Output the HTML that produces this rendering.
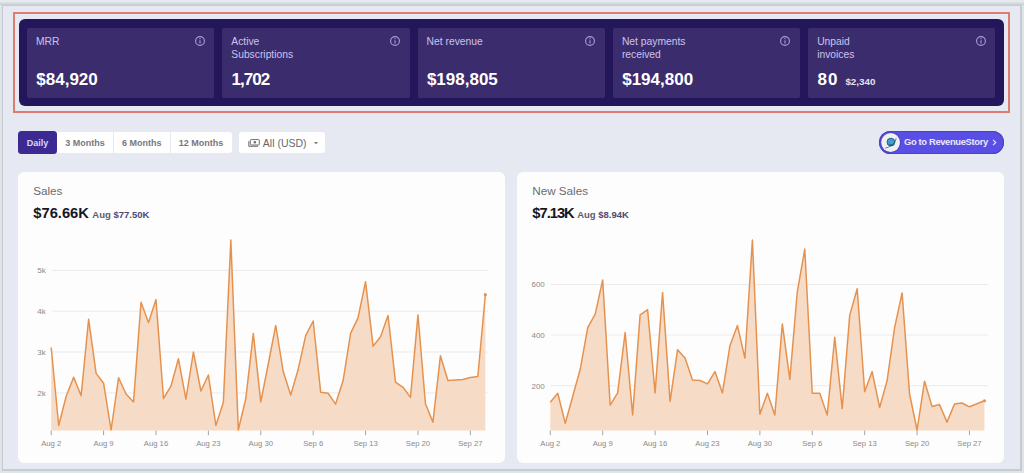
<!DOCTYPE html>
<html><head><meta charset="utf-8">
<style>
*{margin:0;padding:0;box-sizing:border-box}
html,body{width:1024px;height:473px;overflow:hidden;background:linear-gradient(#e7ecf1 0px,#e4e9ed 1.5px,#d3d9dd 3.5px,#c8ced2 5px) top/100% 5px no-repeat,#dfe4e7;font-family:"Liberation Sans",sans-serif}
#frame{position:absolute;left:1.5px;top:4.5px;width:1520px;height:0}
.abs{position:absolute}
#page{position:absolute;left:2px;top:5px;width:1020px;height:466px;background:#e7e9f2;border-left:1.5px solid #c4ccd1;border-top:1.5px solid #c4ccd1;border-right:2px solid #c4ccd1;border-bottom:2px solid #c4ccd1}
#orange{position:absolute;left:12.5px;top:12px;width:997px;height:101px;border:2px solid #dd7c6f}
#dark{position:absolute;left:18.5px;top:18.5px;width:985.5px;height:87.5px;background:#23165a;border-radius:6px}
.card{position:absolute;top:27.7px;width:187.3px;height:70px;background:#3b2d6d;border-radius:2px}
.lab{position:absolute;left:9px;top:7px;font-size:10.3px;line-height:13px;color:#cbc3ee}
.info{position:absolute;left:166.5px;top:7.2px}
.val{position:absolute;left:9.3px;top:43.5px;font-size:17px;font-weight:bold;color:#fff;line-height:18px;white-space:nowrap}
.sub{font-size:9.8px;margin-left:7px;color:#e4e0f4}
.btn{position:absolute;top:132px;height:21px;background:#fff;font-size:9px;font-weight:bold;color:#77777d;text-align:center;line-height:22px}
.chartcard{position:absolute;top:172px;width:487px;height:291px;background:#fdfdfd;border-radius:6px}
.ttl{position:absolute;top:12px;left:15.2px;font-size:11.7px;color:#6c6c70}
.big{position:absolute;top:32.6px;left:15.3px;font-size:14.7px;font-weight:bold;color:#16161f;white-space:nowrap}
.big span{font-size:9.5px;color:#5d5a70;margin-left:3.5px}
.big span b{color:#4f4878;font-weight:bold}
.ch text{font-family:"Liberation Sans",sans-serif}
.yl{font-size:8px;fill:#8a8a8a}
.xl{font-size:7.7px;fill:#8a8a8a}
</style></head><body>
<div id="page"></div>
<div id="orange"></div>
<div id="dark"></div>
<div class="card" style="left:27.0px">
<div class="lab">MRR</div>
<svg class="info" width="12" height="12" viewBox="0 0 12 12"><circle cx="6" cy="6" r="4.4" fill="none" stroke="#a99bdc" stroke-width="1.1"/><line x1="6" y1="5.2" x2="6" y2="8.4" stroke="#a99bdc" stroke-width="1.1"/><circle cx="6" cy="3.7" r="0.65" fill="#a99bdc"/></svg>
<div class="val">$84,920</div>
</div><div class="card" style="left:222.3px">
<div class="lab">Active<br>Subscriptions</div>
<svg class="info" width="12" height="12" viewBox="0 0 12 12"><circle cx="6" cy="6" r="4.4" fill="none" stroke="#a99bdc" stroke-width="1.1"/><line x1="6" y1="5.2" x2="6" y2="8.4" stroke="#a99bdc" stroke-width="1.1"/><circle cx="6" cy="3.7" r="0.65" fill="#a99bdc"/></svg>
<div class="val"><span style="letter-spacing:-1px">1,702</span></div>
</div><div class="card" style="left:417.6px">
<div class="lab">Net revenue</div>
<svg class="info" width="12" height="12" viewBox="0 0 12 12"><circle cx="6" cy="6" r="4.4" fill="none" stroke="#a99bdc" stroke-width="1.1"/><line x1="6" y1="5.2" x2="6" y2="8.4" stroke="#a99bdc" stroke-width="1.1"/><circle cx="6" cy="3.7" r="0.65" fill="#a99bdc"/></svg>
<div class="val">$198,805</div>
</div><div class="card" style="left:612.9px">
<div class="lab">Net payments<br>received</div>
<svg class="info" width="12" height="12" viewBox="0 0 12 12"><circle cx="6" cy="6" r="4.4" fill="none" stroke="#a99bdc" stroke-width="1.1"/><line x1="6" y1="5.2" x2="6" y2="8.4" stroke="#a99bdc" stroke-width="1.1"/><circle cx="6" cy="3.7" r="0.65" fill="#a99bdc"/></svg>
<div class="val">$194,800</div>
</div><div class="card" style="left:808.2px">
<div class="lab">Unpaid<br>invoices</div>
<svg class="info" width="12" height="12" viewBox="0 0 12 12"><circle cx="6" cy="6" r="4.4" fill="none" stroke="#a99bdc" stroke-width="1.1"/><line x1="6" y1="5.2" x2="6" y2="8.4" stroke="#a99bdc" stroke-width="1.1"/><circle cx="6" cy="3.7" r="0.65" fill="#a99bdc"/></svg>
<div class="val"><span style="letter-spacing:1px">80</span><span class="sub">$2,340</span></div>
</div>
<div class="btn" style="left:18px;top:131px;height:23px;line-height:24px;width:39px;background:#3c2a92;color:#ddd6f4;border-radius:3.5px">Daily</div>
<div class="btn" style="left:57px;width:56px;border-radius:0">3 Months</div>
<div class="btn" style="left:114px;width:55.5px;border-radius:0">6 Months</div>
<div class="btn" style="left:170.5px;width:61px;border-radius:0 3px 3px 0">12 Months</div>
<div class="btn" style="left:239px;width:86px;border-radius:3px;font-weight:normal;font-size:10.5px;color:#66666c;text-align:left">
<svg style="position:absolute;left:9px;top:7px" width="12" height="8" viewBox="0 0 12 8"><rect x="2.3" y="0.6" width="9" height="5.4" rx="0.8" fill="none" stroke="#6a6a70" stroke-width="1"/><path d="M0.8 2.2 V7.3 H10" fill="none" stroke="#6a6a70" stroke-width="1"/><circle cx="6.8" cy="3.3" r="1.3" fill="#6a6a70"/></svg>
<span style="position:absolute;left:23.8px;top:-0.4px">All (USD)</span>
<svg style="position:absolute;left:75px;top:9.5px" width="4" height="3" viewBox="0 0 4 3"><path d="M0 0 H4 L2 2.2 Z" fill="#777"/></svg>
</div>
<div class="abs" style="left:879px;top:131px;width:125px;height:23px;border-radius:11.5px;background:#5a4fe4;box-shadow:inset 0 0 0 1px #4c42c8"></div>
<svg class="abs" style="left:879px;top:131px" width="23" height="23" viewBox="0 0 23 23">
<circle cx="11.6" cy="11.5" r="10.3" fill="#4a40bf"/>
<circle cx="11.6" cy="11.5" r="9.4" fill="#eef0f4"/>
<circle cx="11.9" cy="11.1" r="3.9" fill="#3b9fd2" stroke="#22507a" stroke-width="0.9"/>
<path d="M10.2 12.8 A2.2 2.2 0 0 0 13.6 13.4" fill="none" stroke="#1d4d78" stroke-width="0.9"/>
<path d="M6.2 17.2 Q9.5 16.6 13.5 13.8 Q16.8 11 17.2 7.2" fill="none" stroke="#2b4c72" stroke-width="0.7"/>
</svg>
<div class="abs" style="left:904px;top:136px;font-size:9.4px;font-weight:bold;color:#ebe8fc;white-space:nowrap;letter-spacing:-0.35px">Go to RevenueStory</div>
<svg class="abs" style="left:992px;top:139px" width="5" height="7" viewBox="0 0 5 7"><path d="M1 0.8 L3.8 3.5 L1 6.2" fill="none" stroke="#ebe8fc" stroke-width="1.1"/></svg>
<div class="chartcard" style="left:18px">
<div class="ttl">Sales</div>
<div class="big">$76.66K<span>Aug <b>$77.50K</b></span></div>
</div>
<div class="chartcard" style="left:517px">
<div class="ttl">New Sales</div>
<div class="big"><i style="font-style:normal;letter-spacing:-1px">$7.13K</i><span>Aug <b>$8.94K</b></span></div>
</div>
<svg class="ch" width="1024" height="473" viewBox="0 0 1024 473" style="position:absolute;left:0;top:0">
<line x1="51.7" y1="270.4" x2="488" y2="270.4" stroke="#ebebee" stroke-width="1"/>
<text x="45.7" y="273.2" text-anchor="end" class="yl">5k</text>
<line x1="51.7" y1="311.2" x2="488" y2="311.2" stroke="#ebebee" stroke-width="1"/>
<text x="45.7" y="314.0" text-anchor="end" class="yl">4k</text>
<line x1="51.7" y1="352.0" x2="488" y2="352.0" stroke="#ebebee" stroke-width="1"/>
<text x="45.7" y="354.8" text-anchor="end" class="yl">3k</text>
<line x1="51.7" y1="392.9" x2="488" y2="392.9" stroke="#ebebee" stroke-width="1"/>
<text x="45.7" y="395.7" text-anchor="end" class="yl">2k</text>
<path d="M51.20,347.50 L58.69,425.50 L66.17,396.30 L73.66,377.20 L81.14,395.80 L88.62,319.20 L96.11,373.40 L103.59,383.20 L111.08,430.00 L118.57,377.80 L126.05,394.00 L133.54,401.90 L141.02,302.30 L148.50,322.50 L155.99,299.60 L163.48,398.50 L170.96,386.20 L178.44,358.80 L185.93,399.20 L193.42,352.00 L200.90,391.00 L208.38,375.00 L215.87,425.50 L223.36,402.30 L230.84,240.00 L238.32,430.00 L245.81,398.50 L253.30,333.60 L260.78,401.90 L268.26,364.00 L275.75,325.50 L283.24,371.60 L290.72,395.10 L298.21,369.30 L305.69,335.60 L313.18,321.00 L320.66,392.20 L328.14,393.30 L335.63,404.10 L343.12,380.50 L350.60,333.40 L358.08,317.60 L365.57,281.70 L373.06,346.20 L380.54,336.70 L388.02,315.40 L395.51,382.10 L403.00,387.30 L410.48,397.40 L417.97,314.90 L425.45,403.70 L432.94,422.10 L440.42,355.80 L447.91,380.50 L455.39,379.90 L462.88,379.40 L470.36,377.60 L477.85,376.50 L485.33,294.70 L485.33,430.6 L51.20,430.6 Z" fill="#f6dcc6"/>
<clipPath id="c51"><rect x="0" y="0" width="1024" height="431.3"/></clipPath>
<path d="M51.20,347.50 L58.69,425.50 L66.17,396.30 L73.66,377.20 L81.14,395.80 L88.62,319.20 L96.11,373.40 L103.59,383.20 L111.08,430.00 L118.57,377.80 L126.05,394.00 L133.54,401.90 L141.02,302.30 L148.50,322.50 L155.99,299.60 L163.48,398.50 L170.96,386.20 L178.44,358.80 L185.93,399.20 L193.42,352.00 L200.90,391.00 L208.38,375.00 L215.87,425.50 L223.36,402.30 L230.84,240.00 L238.32,430.00 L245.81,398.50 L253.30,333.60 L260.78,401.90 L268.26,364.00 L275.75,325.50 L283.24,371.60 L290.72,395.10 L298.21,369.30 L305.69,335.60 L313.18,321.00 L320.66,392.20 L328.14,393.30 L335.63,404.10 L343.12,380.50 L350.60,333.40 L358.08,317.60 L365.57,281.70 L373.06,346.20 L380.54,336.70 L388.02,315.40 L395.51,382.10 L403.00,387.30 L410.48,397.40 L417.97,314.90 L425.45,403.70 L432.94,422.10 L440.42,355.80 L447.91,380.50 L455.39,379.90 L462.88,379.40 L470.36,377.60 L477.85,376.50 L485.33,294.70" fill="none" stroke="#e6924f" stroke-width="1.5" stroke-linejoin="round" clip-path="url(#c51)"/>
<circle cx="485.33" cy="294.70" r="1.6" fill="#e6924f"/>
<line x1="51.20" y1="430.6" x2="51.20" y2="435.2" stroke="#9a9a9a" stroke-width="0.9"/>
<text x="51.20" y="446.4" text-anchor="middle" class="xl">Aug 2</text>
<line x1="103.59" y1="430.6" x2="103.59" y2="435.2" stroke="#9a9a9a" stroke-width="0.9"/>
<text x="103.59" y="446.4" text-anchor="middle" class="xl">Aug 9</text>
<line x1="155.99" y1="430.6" x2="155.99" y2="435.2" stroke="#9a9a9a" stroke-width="0.9"/>
<text x="155.99" y="446.4" text-anchor="middle" class="xl">Aug 16</text>
<line x1="208.38" y1="430.6" x2="208.38" y2="435.2" stroke="#9a9a9a" stroke-width="0.9"/>
<text x="208.38" y="446.4" text-anchor="middle" class="xl">Aug 23</text>
<line x1="260.78" y1="430.6" x2="260.78" y2="435.2" stroke="#9a9a9a" stroke-width="0.9"/>
<text x="260.78" y="446.4" text-anchor="middle" class="xl">Aug 30</text>
<line x1="313.18" y1="430.6" x2="313.18" y2="435.2" stroke="#9a9a9a" stroke-width="0.9"/>
<text x="313.18" y="446.4" text-anchor="middle" class="xl">Sep 6</text>
<line x1="365.57" y1="430.6" x2="365.57" y2="435.2" stroke="#9a9a9a" stroke-width="0.9"/>
<text x="365.57" y="446.4" text-anchor="middle" class="xl">Sep 13</text>
<line x1="417.97" y1="430.6" x2="417.97" y2="435.2" stroke="#9a9a9a" stroke-width="0.9"/>
<text x="417.97" y="446.4" text-anchor="middle" class="xl">Sep 20</text>
<line x1="470.36" y1="430.6" x2="470.36" y2="435.2" stroke="#9a9a9a" stroke-width="0.9"/>
<text x="470.36" y="446.4" text-anchor="middle" class="xl">Sep 27</text>
</svg>
<svg class="ch" width="1024" height="473" viewBox="0 0 1024 473" style="position:absolute;left:0;top:0">
<line x1="550.8" y1="284.6" x2="988" y2="284.6" stroke="#ebebee" stroke-width="1"/>
<text x="544.8" y="287.4" text-anchor="end" class="yl">600</text>
<line x1="550.8" y1="335.0" x2="988" y2="335.0" stroke="#ebebee" stroke-width="1"/>
<text x="544.8" y="337.8" text-anchor="end" class="yl">400</text>
<line x1="550.8" y1="385.7" x2="988" y2="385.7" stroke="#ebebee" stroke-width="1"/>
<text x="544.8" y="388.5" text-anchor="end" class="yl">200</text>
<path d="M550.30,402.30 L557.78,393.30 L565.27,423.20 L572.75,396.30 L580.24,369.30 L587.72,327.70 L595.21,314.20 L602.69,279.90 L610.18,405.20 L617.66,392.90 L625.15,332.50 L632.63,414.90 L640.12,314.90 L647.61,309.70 L655.09,392.90 L662.57,292.40 L670.06,401.40 L677.54,349.80 L685.03,358.10 L692.51,379.90 L700.00,380.50 L707.48,383.90 L714.97,371.60 L722.45,392.90 L729.94,345.70 L737.42,325.50 L744.91,358.10 L752.39,240.10 L759.88,414.20 L767.37,393.30 L774.85,414.90 L782.33,323.90 L789.82,379.40 L797.30,291.80 L804.79,249.10 L812.27,393.30 L819.76,393.30 L827.24,414.90 L834.73,337.20 L842.21,408.60 L849.70,315.40 L857.18,288.80 L864.67,391.80 L872.15,371.60 L879.64,407.50 L887.12,380.50 L894.61,327.70 L902.10,292.90 L909.58,394.00 L917.07,430.00 L924.55,381.20 L932.03,406.40 L939.52,404.60 L947.00,422.10 L954.49,404.10 L961.97,403.00 L969.46,406.80 L976.94,403.70 L984.43,400.80 L984.43,430.6 L550.30,430.6 Z" fill="#f6dcc6"/>
<clipPath id="c550"><rect x="0" y="0" width="1024" height="431.3"/></clipPath>
<path d="M550.30,402.30 L557.78,393.30 L565.27,423.20 L572.75,396.30 L580.24,369.30 L587.72,327.70 L595.21,314.20 L602.69,279.90 L610.18,405.20 L617.66,392.90 L625.15,332.50 L632.63,414.90 L640.12,314.90 L647.61,309.70 L655.09,392.90 L662.57,292.40 L670.06,401.40 L677.54,349.80 L685.03,358.10 L692.51,379.90 L700.00,380.50 L707.48,383.90 L714.97,371.60 L722.45,392.90 L729.94,345.70 L737.42,325.50 L744.91,358.10 L752.39,240.10 L759.88,414.20 L767.37,393.30 L774.85,414.90 L782.33,323.90 L789.82,379.40 L797.30,291.80 L804.79,249.10 L812.27,393.30 L819.76,393.30 L827.24,414.90 L834.73,337.20 L842.21,408.60 L849.70,315.40 L857.18,288.80 L864.67,391.80 L872.15,371.60 L879.64,407.50 L887.12,380.50 L894.61,327.70 L902.10,292.90 L909.58,394.00 L917.07,430.00 L924.55,381.20 L932.03,406.40 L939.52,404.60 L947.00,422.10 L954.49,404.10 L961.97,403.00 L969.46,406.80 L976.94,403.70 L984.43,400.80" fill="none" stroke="#e6924f" stroke-width="1.5" stroke-linejoin="round" clip-path="url(#c550)"/>
<circle cx="984.43" cy="400.80" r="1.6" fill="#e6924f"/>
<line x1="550.30" y1="430.6" x2="550.30" y2="435.2" stroke="#9a9a9a" stroke-width="0.9"/>
<text x="550.30" y="446.4" text-anchor="middle" class="xl">Aug 2</text>
<line x1="602.69" y1="430.6" x2="602.69" y2="435.2" stroke="#9a9a9a" stroke-width="0.9"/>
<text x="602.69" y="446.4" text-anchor="middle" class="xl">Aug 9</text>
<line x1="655.09" y1="430.6" x2="655.09" y2="435.2" stroke="#9a9a9a" stroke-width="0.9"/>
<text x="655.09" y="446.4" text-anchor="middle" class="xl">Aug 16</text>
<line x1="707.48" y1="430.6" x2="707.48" y2="435.2" stroke="#9a9a9a" stroke-width="0.9"/>
<text x="707.48" y="446.4" text-anchor="middle" class="xl">Aug 23</text>
<line x1="759.88" y1="430.6" x2="759.88" y2="435.2" stroke="#9a9a9a" stroke-width="0.9"/>
<text x="759.88" y="446.4" text-anchor="middle" class="xl">Aug 30</text>
<line x1="812.27" y1="430.6" x2="812.27" y2="435.2" stroke="#9a9a9a" stroke-width="0.9"/>
<text x="812.27" y="446.4" text-anchor="middle" class="xl">Sep 6</text>
<line x1="864.67" y1="430.6" x2="864.67" y2="435.2" stroke="#9a9a9a" stroke-width="0.9"/>
<text x="864.67" y="446.4" text-anchor="middle" class="xl">Sep 13</text>
<line x1="917.07" y1="430.6" x2="917.07" y2="435.2" stroke="#9a9a9a" stroke-width="0.9"/>
<text x="917.07" y="446.4" text-anchor="middle" class="xl">Sep 20</text>
<line x1="969.46" y1="430.6" x2="969.46" y2="435.2" stroke="#9a9a9a" stroke-width="0.9"/>
<text x="969.46" y="446.4" text-anchor="middle" class="xl">Sep 27</text>
</svg>
</body></html>
